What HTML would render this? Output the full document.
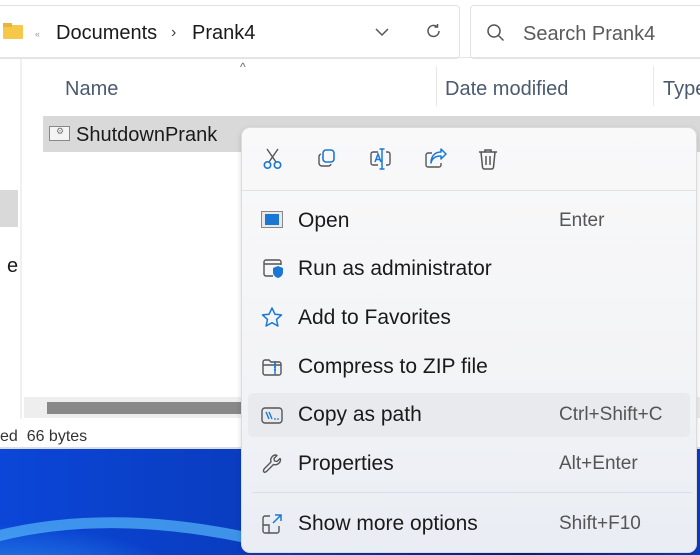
<!DOCTYPE html>
<html><head><meta charset="utf-8"><style>
*{margin:0;padding:0;box-sizing:border-box}
html{width:700px;height:555px;overflow:hidden}
body{width:700px;height:555px;overflow:hidden;position:relative;background:#fff;font-family:"Segoe UI","Liberation Sans",sans-serif;color:#1a1a1a}
.a{position:absolute}
.t{position:absolute;white-space:nowrap}
</style></head><body>
<!-- wallpaper -->
<div class="a" style="left:0;top:448px;width:700px;height:107px;overflow:hidden;background:radial-gradient(ellipse 300px 120px at 0px 160px,#3fa3f0 0%,#1f6fe0 40%,transparent 70%),linear-gradient(90deg,#0b46d8 0%,#0a3ab8 45%,#06238a 75%,#0d3cc0 100%)">
<svg class="a" style="left:0;top:0" width="300" height="107"><path d="M-10 90 Q120 55 290 100" stroke="rgba(80,175,245,.75)" stroke-width="11" fill="none"/></svg>
</div>
<!-- top bar -->
<div class="a" style="left:0;top:0;width:700px;height:58px;background:#fff;border-bottom:1px solid #e5e5e5"></div>
<div class="a" style="left:-10px;top:5px;width:470px;height:54px;border:1px solid #e2e2e2;border-radius:4px"></div>
<div class="a" style="left:470px;top:5px;width:230px;height:54px;border:1px solid #e2e2e2;border-right:none;border-radius:4px 0 0 4px"></div>
<div class="a" style="left:3px;top:25px;width:20px;height:14px;background:#f5c84a;border-radius:1px"></div>
<div class="a" style="left:3px;top:23px;width:9px;height:4px;background:#e9b43a"></div>
<div class="t" style="left:35px;top:29px;font-size:9px;color:#999">«</div>
<div class="t" style="left:56px;top:22px;font-size:20px">Documents</div>
<div class="t" style="left:171px;top:24px;font-size:16px;color:#444">›</div>
<div class="t" style="left:192px;top:22px;font-size:20px">Prank4</div>
<svg class="a" style="left:374px;top:27px" width="16" height="10"><path d="M2 2l6 6 6-6" stroke="#555" stroke-width="1.5" fill="none"/></svg>
<svg class="a" style="left:425px;top:22px" width="18" height="18"><path d="M14 9a5.5 5.5 0 1 1-2-4.3M12.5 2v3h-3" stroke="#555" stroke-width="1.5" fill="none"/></svg>
<svg class="a" style="left:486px;top:23px" width="20" height="20"><circle cx="8" cy="8" r="6" stroke="#555" stroke-width="1.5" fill="none"/><path d="M12.5 12.5l5 5" stroke="#555" stroke-width="1.5"/></svg>
<div class="t" style="left:523px;top:23px;font-size:20px;color:#5a5a5a">Search Prank4</div>
<!-- header -->
<div class="a" style="left:20px;top:59px;width:2px;height:360px;background:#f0f0f0"></div>
<div class="t" style="left:240px;top:60px;font-size:12px;color:#666">^</div>
<div class="t" style="left:65px;top:78px;font-size:20px;color:#4a5a70">Name</div>
<div class="a" style="left:436px;top:66px;width:1px;height:40px;background:#e8e8e8"></div>
<div class="t" style="left:445px;top:78px;font-size:20px;color:#4a5a70">Date modified</div>
<div class="a" style="left:653px;top:66px;width:1px;height:40px;background:#e8e8e8"></div>
<div class="t" style="left:663px;top:78px;font-size:20px;color:#4a5a70">Type</div>
<div class="a" style="left:43px;top:116px;width:657px;height:36px;background:#d9d9d9"></div>
<div class="a" style="left:49px;top:126px;width:21px;height:15px;border:1px solid #888;background:#f4f4f4"></div>
<div class="t" style="left:56px;top:126px;font-size:9px;color:#777">⚙</div>
<div class="t" style="left:76px;top:124px;font-size:20px">ShutdownPrank</div>
<div class="a" style="left:0;top:190px;width:18px;height:37px;background:#d9d9d9"></div>
<div class="t" style="left:7px;top:255px;font-size:20px">e</div>
<!-- scrollbar & status -->
<div class="a" style="left:24px;top:397px;width:676px;height:21px;background:#eee"></div>
<div class="a" style="left:47px;top:402px;width:200px;height:12px;background:#888"></div>
<div class="t" style="left:0;top:428px;font-size:16px;color:#333">ed&nbsp; 66 bytes</div>
<div class="a" style="left:0;top:447px;width:700px;height:2px;background:#ddd"></div>
<!-- menu -->
<div class="a" style="left:241px;top:127px;width:456px;height:426px;background:linear-gradient(180deg,#f9f9fa 0%,#f3f4f6 55%,#e9edf4 100%);border:1px solid #dcdcdc;border-radius:9px;box-shadow:0 2px 6px rgba(0,0,0,.15)"></div>
<div class="a" style="left:242px;top:190px;width:454px;height:1px;background:#e2e2e2"></div>
<!-- toolbar icons -->
<svg class="a" style="left:262px;top:147px" width="22" height="24"><path d="M5 2l9 13M16 2l-9 13" stroke="#555" stroke-width="1.4"/><circle cx="5.5" cy="18" r="3.2" stroke="#1a78d4" stroke-width="1.6" fill="none"/><circle cx="15.5" cy="18" r="3.2" stroke="#1a78d4" stroke-width="1.6" fill="none"/></svg>
<svg class="a" style="left:316px;top:148px" width="22" height="22"><rect x="7" y="2" width="11" height="12" rx="3" stroke="#1a78d4" stroke-width="1.6" fill="none"/><path d="M5 6a3 3 0 0 0-2 3v6a3 3 0 0 0 3 3h6a3 3 0 0 0 3-2" stroke="#555" stroke-width="1.4" fill="none"/></svg>
<svg class="a" style="left:369px;top:147px" width="24" height="24"><path d="M9 5H4a2 2 0 0 0-2 2v9a2 2 0 0 0 2 2h5M17 5h2a2 2 0 0 1 2 2v9a2 2 0 0 1-2 2h-2" stroke="#555" stroke-width="1.4" fill="none"/><path d="M13 2v20M10.5 2h5M10.5 22h5M6 15l3-8 3 8M7 12.5h4" stroke="#1a78d4" stroke-width="1.5" fill="none"/></svg>
<svg class="a" style="left:423px;top:147px" width="24" height="24"><path d="M9 6H5a2 2 0 0 0-2 2v10a2 2 0 0 0 2 2h11a2 2 0 0 0 2-2v-2" stroke="#555" stroke-width="1.4" fill="none"/><path d="M8 16c1-5 5-7 10-7V12l5-5-5-5v3c-6 0-10 4-10 11z" stroke="#1a78d4" stroke-width="1.5" fill="none" stroke-linejoin="round"/></svg>
<svg class="a" style="left:477px;top:147px" width="22" height="24"><path d="M2 5h18M8 5V3h6v2M4 5l1.5 15a2 2 0 0 0 2 2h7a2 2 0 0 0 2-2L18 5M9 9v9M13 9v9" stroke="#555" stroke-width="1.5" fill="none"/></svg>
<!-- highlight -->
<div class="a" style="left:248px;top:393px;width:442px;height:44px;background:#e8eaee;border-radius:5px"></div>
<div class="a" style="left:252px;top:492px;width:440px;height:1px;background:#dadde2"></div>
<!-- items -->
<div class="a" style="left:261px;top:211px;width:22px;height:17px;border:1px solid #888;background:#e8e8e8"></div>
<div class="a" style="left:265px;top:214px;width:14px;height:11px;background:#1a78d4"></div>
<svg class="a" style="left:261px;top:256px" width="24" height="24"><path d="M12 20H5a2 2 0 0 1-2-2V6a2 2 0 0 1 2-2h13a2 2 0 0 1 2 2v3M3 8h17" stroke="#555" stroke-width="1.4" fill="none"/><path d="M17 10l5 2v4c0 3-2 5-5 6-3-1-5-3-5-6v-4z" fill="#1a78d4"/></svg>
<svg class="a" style="left:260px;top:306px" width="24" height="24"><path d="M12 2l2.9 6.2 6.6.7-5 4.5 1.4 6.6L12 16.7 6.1 20l1.4-6.6-5-4.5 6.6-.7z" stroke="#1a78d4" stroke-width="1.5" fill="none" stroke-linejoin="round"/></svg>
<svg class="a" style="left:260px;top:355px" width="24" height="24"><path d="M3 7a2 2 0 0 1 2-2h4l2 2h8a2 2 0 0 1 2 2v9a2 2 0 0 1-2 2H5a2 2 0 0 1-2-2zM3 10h18" stroke="#555" stroke-width="1.4" fill="none"/><path d="M15 6v14M14 9h2M14 12h2M14 15h2" stroke="#1a78d4" stroke-width="1.4"/></svg>
<svg class="a" style="left:260px;top:404px" width="24" height="24"><rect x="2" y="4" width="20" height="15" rx="3" stroke="#555" stroke-width="1.4" fill="none"/><path d="M6 8l3 7M9 8l3 7" stroke="#1a78d4" stroke-width="1.4"/><circle cx="15" cy="15" r=".9" fill="#1a78d4"/><circle cx="18" cy="15" r=".9" fill="#1a78d4"/></svg>
<svg class="a" style="left:260px;top:452px" width="24" height="24"><path d="M4 20c-1.5-1.5 0-3 1-4l6-6c-1-3 1-7 5-7l1 .5-3 3 .5 2.5 2.5.5 3-3 .5 1c0 4-4 6-7 5l-6 6c-1 1-2.5 2.5-3.5 1.5z" stroke="#555" stroke-width="1.4" fill="none" stroke-linejoin="round"/></svg>
<svg class="a" style="left:260px;top:512px" width="24" height="24"><path d="M10 4H5a2 2 0 0 0-2 2v13a2 2 0 0 0 2 2h12a2 2 0 0 0 2-2v-5M3 13h6v8" stroke="#555" stroke-width="1.4" fill="none"/><path d="M13 11l8-8M15 3h6v6" stroke="#1a78d4" stroke-width="1.5" fill="none"/></svg>
<div class="t" style="left:298px;top:209px;font-size:21px">Open</div>
<div class="t" style="left:559px;top:210px;font-size:19px;color:#555">Enter</div>
<div class="t" style="left:298px;top:257px;font-size:21px">Run as administrator</div>
<div class="t" style="left:298px;top:306px;font-size:21px">Add to Favorites</div>
<div class="t" style="left:298px;top:355px;font-size:21px">Compress to ZIP file</div>
<div class="t" style="left:298px;top:403px;font-size:21px">Copy as path</div>
<div class="t" style="left:559px;top:404px;font-size:19px;color:#555">Ctrl+Shift+C</div>
<div class="t" style="left:298px;top:452px;font-size:21px">Properties</div>
<div class="t" style="left:559px;top:453px;font-size:19px;color:#555">Alt+Enter</div>
<div class="t" style="left:298px;top:512px;font-size:21px">Show more options</div>
<div class="t" style="left:559px;top:513px;font-size:19px;color:#555">Shift+F10</div>
</body></html>
